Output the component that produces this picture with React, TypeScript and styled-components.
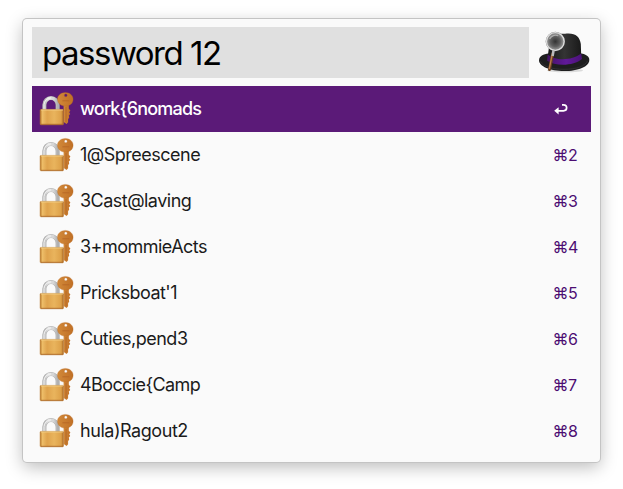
import React from 'react';
import styled, { createGlobalStyle } from 'styled-components';

const GlobalStyle = createGlobalStyle`
  * { box-sizing: border-box; }
  html, body { margin: 0; background: #fff; }
  body { overflow: hidden; font-family: Inter, "Liberation Sans", sans-serif; }
  svg { display: block; flex: none; }
`;

const Desktop = styled.main`
  width: 623px;
  height: 489px;
  padding: 19px 0 0 23px;
`;

const LauncherWindow = styled.section`
  width: 577px;
  height: 443px;
  padding: 8px 9px;
  border-radius: 4px;
  background: #fafafa;
  box-shadow: 0 0 0 1px #c4c4c4, 0 5px 17px rgba(0, 0, 0, 0.27);
`;

const Header = styled.header`
  display: flex;
  height: 51px;
  margin-bottom: 8px;
`;

const SearchField = styled.div`
  width: 497px;
  height: 51px;
  padding-left: 10px;
  background: #e0e0e0;
  color: #000;
  font-size: 33px;
  line-height: 52px;
  letter-spacing: -1.5px;
  white-space: pre;
`;

const Brand = styled.div`
  margin-left: 9px;
`;

const Results = styled.ul`
  width: 559px;
  margin: 0;
  padding: 0;
  list-style: none;
`;

const ResultRow = styled.li<{ $active: boolean }>`
  display: flex;
  align-items: center;
  height: 46px;
  padding: 0 14px 0 6px;
  background: ${p => (p.$active ? '#5b1a78' : 'transparent')};
  color: ${p => (p.$active ? '#fff' : '#1b1b1b')};
`;

const Title = styled.span<{ $tracking: number; $active: boolean }>`
  flex: 1;
  margin-left: 6px;
  font-size: 18px;
  line-height: 46px;
  font-weight: ${p => (p.$active ? 500 : 400)};
  letter-spacing: ${p => p.$tracking}px;
  white-space: pre;
`;

const Shortcut = styled.span`
  display: flex;
  align-items: center;
  width: 24.5px;
  color: #4c0d72;
  font-size: 16px;
  letter-spacing: -0.6px;
`;

function PadlockIcon() {
  return (
    <svg width="36" height="36" viewBox="0 0 36 36">
      <defs>
        <linearGradient id="brass" x1="0" x2="1">
          <stop offset="0" stopColor="#b97728" />
          <stop offset=".1" stopColor="#edbd68" />
          <stop offset=".3" stopColor="#dfa34d" />
          <stop offset=".6" stopColor="#e9b45d" />
          <stop offset=".9" stopColor="#dda149" />
          <stop offset="1" stopColor="#a96421" />
        </linearGradient>
        <linearGradient id="steel" x1="0" x2="1">
          <stop offset="0" stopColor="#bbb" />
          <stop offset=".3" stopColor="#e2e2e2" />
          <stop offset=".7" stopColor="#d5d5d5" />
          <stop offset="1" stopColor="#b0b0b0" />
        </linearGradient>
        <linearGradient id="bronze" x1="0" x2="1">
          <stop offset="0" stopColor="#d28939" />
          <stop offset="1" stopColor="#c07026" />
        </linearGradient>
      </defs>
      <path d="M6.4 19v-5.3a6.6 6.6 0 0 1 13.2 0V19" fill="none" stroke="#aaa" strokeWidth="4" />
      <path d="M6.4 19v-5.3a6.6 6.6 0 0 1 13.2 0V19" fill="none" stroke="url(#steel)" strokeWidth="3.2" />
      <path d="M6 18v-4.2a7 7 0 0 1 7-6.9" fill="none" stroke="#f5f5f5" strokeWidth="1" />
      <path d="M25.6 14h5.2v3.8l1.6 1.7-1.2 1.7 1 1.8-1.4 1.5.4 2-1.1 1.8v3L28.6 33l-3-2Z" fill="url(#bronze)" />
      <path d="M28 16v15.5" stroke="#ad6323" strokeWidth=".8" />
      <rect x="2.1" y="18.4" width="23.4" height="15.4" rx=".8" fill="url(#brass)" stroke="#b97a31" strokeWidth=".5" />
      <path d="M3 19h22" stroke="#f8d58d" strokeWidth=".8" />
      <path d="M3 33.3h22" stroke="#a96627" strokeWidth=".8" />
      <path fillRule="evenodd" d="M27.4 1.4c4.3 0 7.7 2.9 7.7 6.7s-2.5 7-7.7 7-7.9-3.2-7.9-7 3.6-6.7 7.9-6.7Zm.4 1.4a1.5 1.5 0 1 0 0 3 1.5 1.5 0 0 0 0-3Z" fill="url(#bronze)" stroke="#b8671f" strokeWidth=".3" />
      <path d="M24.4 9.8h7" stroke="#b86927" strokeWidth="1" />
    </svg>
  );
}

function HatLogo() {
  return (
    <svg width="52" height="51" viewBox="0 0 52 51">
      <defs>
        <linearGradient id="crown" x1="0" x2="1">
          <stop offset="0" stopColor="#171717" />
          <stop offset=".5" stopColor="#343434" />
          <stop offset="1" stopColor="#191919" />
        </linearGradient>
        <linearGradient id="ribbon" x1="0" x2="1">
          <stop offset="0" stopColor="#431365" />
          <stop offset=".55" stopColor="#61199a" />
          <stop offset="1" stopColor="#4a1278" />
        </linearGradient>
        <radialGradient id="lens">
          <stop offset="0" stopColor="#333" />
          <stop offset=".6" stopColor="#606060" />
          <stop offset="1" stopColor="#999" />
        </radialGradient>
      </defs>
      <ellipse cx="27" cy="43.5" rx="18" ry="1.7" fill="#bbb" opacity=".5" />
      <path d="M1 33.3c0-4 4.5-6 9.5-6.7H43c5 .7 8.3 3 8.3 6.3C51.3 39.5 40 44 26 44S1 39.5 1 33.3Z" fill="#1e1e1f" />
      <path d="M2.5 34.5C5 39.5 14 42.3 26 42.3c13 0 21-3.3 23.6-8.5" fill="none" stroke="#353536" strokeWidth=".8" />
      <path d="M9.5 31.5 11.5 16C12.6 9.6 17 6.6 23 6.7c3 .1 4.5-.3 7.5-.3 7.5 0 11.6 4 12.3 10.6L43.3 31c-7 5-27.3 6-33.8.5Z" fill="url(#crown)" />
      <path d="M9.7 27.5c7 6.5 24 6.5 33.5-.9l.8 5.4c-8 6.9-26.5 7.8-35 1.4Z" fill="url(#ribbon)" />
      <path d="m14.6 27-3.1 15.5" stroke="#68401f" strokeWidth="3" strokeLinecap="round" />
      <path d="m14.1 28-2.9 14" stroke="#bb7b4c" strokeWidth="1.3" />
      <path d="m15.6 23-1 6" stroke="#bbb" strokeWidth="2.6" />
      <circle cx="17.3" cy="14.5" r="8.5" fill="url(#lens)" stroke="#858585" strokeWidth="2.4" />
      <circle cx="17.3" cy="14.5" r="8.8" fill="none" stroke="#dedede" strokeWidth="1.3" />
      <path d="M11.6 12a6.5 6.5 0 0 1 8.6-3.3" fill="none" stroke="#aaa" strokeWidth="1.4" />
    </svg>
  );
}

function ReturnIcon() {
  return (
    <svg width="16" height="14" viewBox="0 0 16 14" fill="none" stroke="#fff">
      <path d="M4 8.8h6.5c4.2 0 4.2-6 0-6H9" strokeWidth="1.7" />
      <path d="M5.6 5.2 1.2 8.8l4.4 3.7Z" fill="#fff" stroke="none" />
    </svg>
  );
}

const results = [
  { text: 'work{6nomads', tracking: -0.8 },
  { text: '1@Spreescene', tracking: -0.5 },
  { text: '3Cast@laving', tracking: -0.52 },
  { text: '3+mommieActs', tracking: -0.52 },
  { text: "Pricksboat'1", tracking: -0.52 },
  { text: 'Cuties,pend3', tracking: -0.5 },
  { text: '4Boccie{Camp', tracking: -0.6 },
  { text: 'hula)Ragout2', tracking: -0.45 },
];

export default function App() {
  return (
    <>
      <GlobalStyle />
      <Desktop>
        <LauncherWindow>
          <Header>
            <SearchField>password 12</SearchField>
            <Brand><HatLogo /></Brand>
          </Header>
          <Results>
            {results.map((item, i) => (
              <ResultRow key={item.text} $active={i === 0}>
                <PadlockIcon />
                <Title $tracking={item.tracking} $active={i === 0}>{item.text}</Title>
                <Shortcut>{i === 0 ? <ReturnIcon /> : `⌘${i + 1}`}</Shortcut>
              </ResultRow>
            ))}
          </Results>
        </LauncherWindow>
      </Desktop>
    </>
  );
}
